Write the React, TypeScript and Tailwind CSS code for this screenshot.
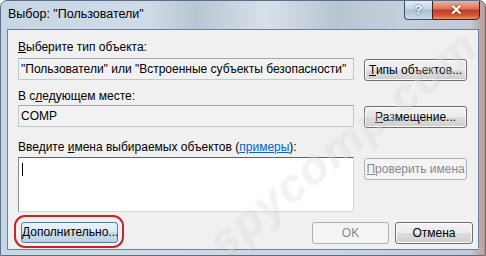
import React from 'react';

const font = "font-['Liberation_Sans',Arial,sans-serif]";

const btn =
  'h-[22px] rounded-[3px] border border-[#707070] bg-[linear-gradient(#f3f3f3,#ebebeb_50%,#dddddd_50%,#cfcfcf)] shadow-[inset_0_0_0_1px_#fbfbfb] text-[12px] leading-[20px] text-black text-center whitespace-nowrap';
const btnOff =
  'h-[22px] rounded-[3px] border border-[#adb2b5] bg-[#f4f4f4] text-[12px] leading-[20px] text-[#8a8a8a] text-center whitespace-nowrap';
const box =
  'h-[22px] w-[337px] border border-[#c4c7cc] border-t-[#a3a6ab] bg-[#f2f2f2] text-[12px] leading-[20px] text-black pl-[2px] whitespace-nowrap overflow-hidden';

function Grip() {
  return (
    <svg width="10" height="10" viewBox="0 0 10 10" className="absolute right-[2px] bottom-[2px]">
      {[
        [8, 2],
        [5, 5],
        [8, 5],
        [2, 8],
        [5, 8],
        [8, 8],
      ].map(([x, y], i) => (
        <rect key={i} x={x} y={y} width="1.5" height="1.5" fill="#b8bcc2" />
      ))}
    </svg>
  );
}

export default function App() {
  return (
    <div
      className={`${font} relative w-[486px] h-[256px] overflow-hidden rounded-t-[7px] border border-[#5b6f86] bg-[linear-gradient(90deg,#c7d6e5,#cfdbe7_30%,#c9d5e1_70%,#bfcbd8_97%,#b79a92)] flex flex-col px-[6px] pb-[5px]`}
    >
      {/* Заголовок */}
      <div className="h-[28px] flex items-start justify-between bg-[linear-gradient(90deg,transparent_30%,#b9c6d3_40%,#d7e1ea_55%,#b7c4d1_70%,transparent_85%)]">
        <span className="pt-[4px] pl-[1px] text-[12.5px] text-black whitespace-nowrap">Выбор: "Пользователи"</span>
        <div className="flex -mt-px mr-[-1px]">
          <div className="w-[28px] h-[20px] rounded-bl-[4px] border border-[#3d5066] border-r-0 bg-[linear-gradient(#e3ecf5,#c4d4e4_45%,#a9bed4_50%,#c9dbea)] flex items-center justify-center text-[13px] font-bold text-white [text-shadow:0_0_2px_#1f3550]">
            ?
          </div>
          <div className="w-[48px] h-[20px] rounded-br-[4px] border border-[#4a1d16] bg-[linear-gradient(#eab2a4,#d7735d_45%,#c23a21_50%,#d5583b_80%,#e7935e)] flex items-center justify-center text-[15px] font-black text-white [text-shadow:0_0_2px_#3a0c05]">
            ✕
          </div>
        </div>
      </div>

      {/* Клиентская область */}
      <div className="flex-1 bg-[#f0f0f0] border border-[#6f8196] flex flex-col pl-[10px] pr-[11px] pt-[10px] text-[12px] text-black">
        <div className="h-[15px] leading-[15px] whitespace-nowrap">
          <u>В</u>ыберите тип объекта:
        </div>
        <div className="mt-[3px] flex items-start gap-[10px]">
          <div className={box}>"Пользователи" или "Встроенные субъекты безопасности"</div>
          <button className={`${btn} w-[103px] mt-px`}>
            <u>Т</u>ипы объектов...
          </button>
        </div>

        <div className="mt-[8px] h-[15px] leading-[15px] whitespace-nowrap">
          В с<u>л</u>едующем месте:
        </div>
        <div className="mt-[1px] flex items-start gap-[10px]">
          <div className={box}>COMP</div>
          <button className={`${btn} w-[103px] mt-px`}>
            <u>Р</u>азмещение...
          </button>
        </div>

        <div className="mt-[12px] h-[15px] leading-[15px] whitespace-nowrap">
          Введите <u>и</u>мена выбираемых объектов (<span className="text-[#0066cc] underline">примеры</span>):
        </div>
        <div className="mt-[2px] flex items-start gap-[10px]">
          <div className="h-[55px] w-[337px] border border-[#d5d8dc] border-t-[#5f6368] border-l-[#8a8e94] bg-white">
            <span className="block w-px h-[13px] bg-black ml-[3px] mt-[5px]" />
          </div>
          <button className={`${btnOff} w-[103px] mt-px text-[11.5px]`}>
            <u>П</u>роверить имена
          </button>
        </div>

        <div className="mt-[10px] flex items-start justify-between pl-[3px] mr-[-6px]">
          <div className="relative">
            <button className="h-[21px] w-[97px] rounded-[3px] border border-[#5c7a99] bg-[linear-gradient(#e9f2f9,#dbe9f4_50%,#c7dcec_50%,#bcd3e6)] text-[12px] leading-[19px] text-black text-center whitespace-nowrap">
              <u>Д</u>ополнительно...
            </button>
            <div className="absolute left-[-7px] right-[-6px] top-[-7px] bottom-[-5px] rounded-[11px] border-2 border-[#c5252b]" />
          </div>
          <div className="flex gap-[6px]">
            <button className={`${btnOff} w-[77px]`}>OK</button>
            <button className={`${btn} w-[78px]`}>Отмена</button>
          </div>
        </div>
      </div>

      <Grip />

      {/* Водяной знак */}
      <div className="pointer-events-none absolute left-[170px] top-[108px] w-[340px] text-center rotate-[-39deg] text-[46px] font-bold italic tracking-[2px] text-white/25 [text-shadow:1px_1px_2px_rgba(140,140,140,0.15)] whitespace-nowrap">
        spycomp.com
      </div>
    </div>
  );
}
